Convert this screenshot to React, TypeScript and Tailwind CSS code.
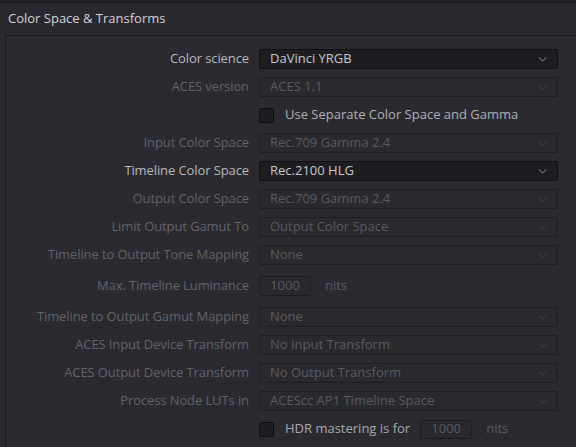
import { ChevronDown } from "lucide-react"

type Row =
  | { kind: "select"; label: string; value: string; active?: boolean; labelActive?: boolean; h?: number }
  | { kind: "check"; label: string }
  | { kind: "nits"; label: string; value: string; h?: number }
  | { kind: "hdr" }

const rows: Row[] = [
  { kind: "select", label: "Color science", value: "DaVinci YRGB", active: true, labelActive: true },
  { kind: "select", label: "ACES version", value: "ACES 1.1" },
  { kind: "check", label: "Use Separate Color Space and Gamma" },
  { kind: "select", label: "Input Color Space", value: "Rec.709 Gamma 2.4" },
  { kind: "select", label: "Timeline Color Space", value: "Rec.2100 HLG", active: true, labelActive: true },
  { kind: "select", label: "Output Color Space", value: "Rec.709 Gamma 2.4" },
  { kind: "select", label: "Limit Output Gamut To", value: "Output Color Space" },
  { kind: "select", label: "Timeline to Output Tone Mapping", value: "None" },
  { kind: "nits", label: "Max. Timeline Luminance", value: "1000", h: 34 },
  { kind: "select", label: "Timeline to Output Gamut Mapping", value: "None", h: 28 },
  { kind: "select", label: "ACES Input Device Transform", value: "No Input Transform" },
  { kind: "select", label: "ACES Output Device Transform", value: "No Output Transform" },
  { kind: "select", label: "Process Node LUTs in", value: "ACEScc AP1 Timeline Space" },
  { kind: "hdr" },
]

function Label({ text, active }: { text: string; active?: boolean }) {
  return (
    <div className={"w-[253px] shrink-0 pr-[10px] text-right tracking-[-0.1px] " + (active ? "text-[#b9b9bd]" : "text-[#626268]")}>
      {text}
    </div>
  )
}

function Checkbox() {
  return <div className="h-[15px] w-[15px] rounded-[2px] border border-[#0f0f11] bg-[#1e1e22]" />
}

export default function App() {
  return (
    <div
      className="h-[447px] w-[576px] overflow-hidden bg-[#28282e] text-[13px]"
      style={{ fontFamily: '"Open Sans", "Noto Sans", sans-serif' }}
    >
      <div className="h-[3px] border-b border-[#18181b] bg-[#222226]" />
      <div className="flex h-[32px] items-center pl-[8px] text-[13px] text-[#d4d4d8]">Color Space &amp; Transforms</div>
      <div className="ml-[5px] h-full border-l border-t border-[#1a1a1d] bg-[#2a2a30] pt-[9px]">
        {rows.map((r, i) => {
          if (r.kind === "check")
            return (
              <div key={i} className="flex h-[28px] items-center">
                <div className="w-[253px] shrink-0" />
                <div className="flex items-center gap-[11px] text-[#b0b0b4]">
                  <Checkbox />
                  {r.label}
                </div>
              </div>
            )
          if (r.kind === "hdr")
            return (
              <div key={i} className="flex h-[28px] items-center">
                <div className="w-[253px] shrink-0" />
                <div className="flex items-center text-[#a8a8ac]">
                  <Checkbox />
                  <span className="ml-[11px]">HDR mastering is for</span>
                  <div className="ml-[10px] flex h-[19px] w-[52px] items-center justify-center rounded-[2px] border border-[#1e1e22] bg-[#28282d] text-[#5a5a60]">
                    1000
                  </div>
                  <span className="ml-[14px] text-[#5a5a60]">nits</span>
                </div>
              </div>
            )
          if (r.kind === "nits")
            return (
              <div key={i} className="flex items-center" style={{ height: r.h }}>
                <Label text={r.label} />
                <div className="flex h-[20px] w-[52px] items-center justify-center rounded-[2px] border border-[#1e1e22] bg-[#28282d] text-[#5a5a60]">
                  {r.value}
                </div>
                <span className="ml-[14px] text-[#5a5a60]">nits</span>
              </div>
            )
          return (
            <div key={i} className="flex items-center" style={{ height: r.h ?? 28 }}>
              <Label text={r.label} active={r.labelActive} />
              <div
                className={
                  "flex h-[20px] w-[299px] items-center justify-between rounded-[2px] border pl-[10px] pr-[8px] " +
                  (r.active
                    ? "border-[#101012] bg-[#1e1e22] text-[#c8c8cc]"
                    : "border-[#1f1f23] bg-[#29292e] text-[#5a5a60]")
                }
              >
                <span>{r.value}</span>
                <ChevronDown size={13} strokeWidth={1.5} className={r.active ? "text-[#b0b0b4]" : "text-[#4a4a50]"} />
              </div>
            </div>
          )
        })}
      </div>
    </div>
  )
}
